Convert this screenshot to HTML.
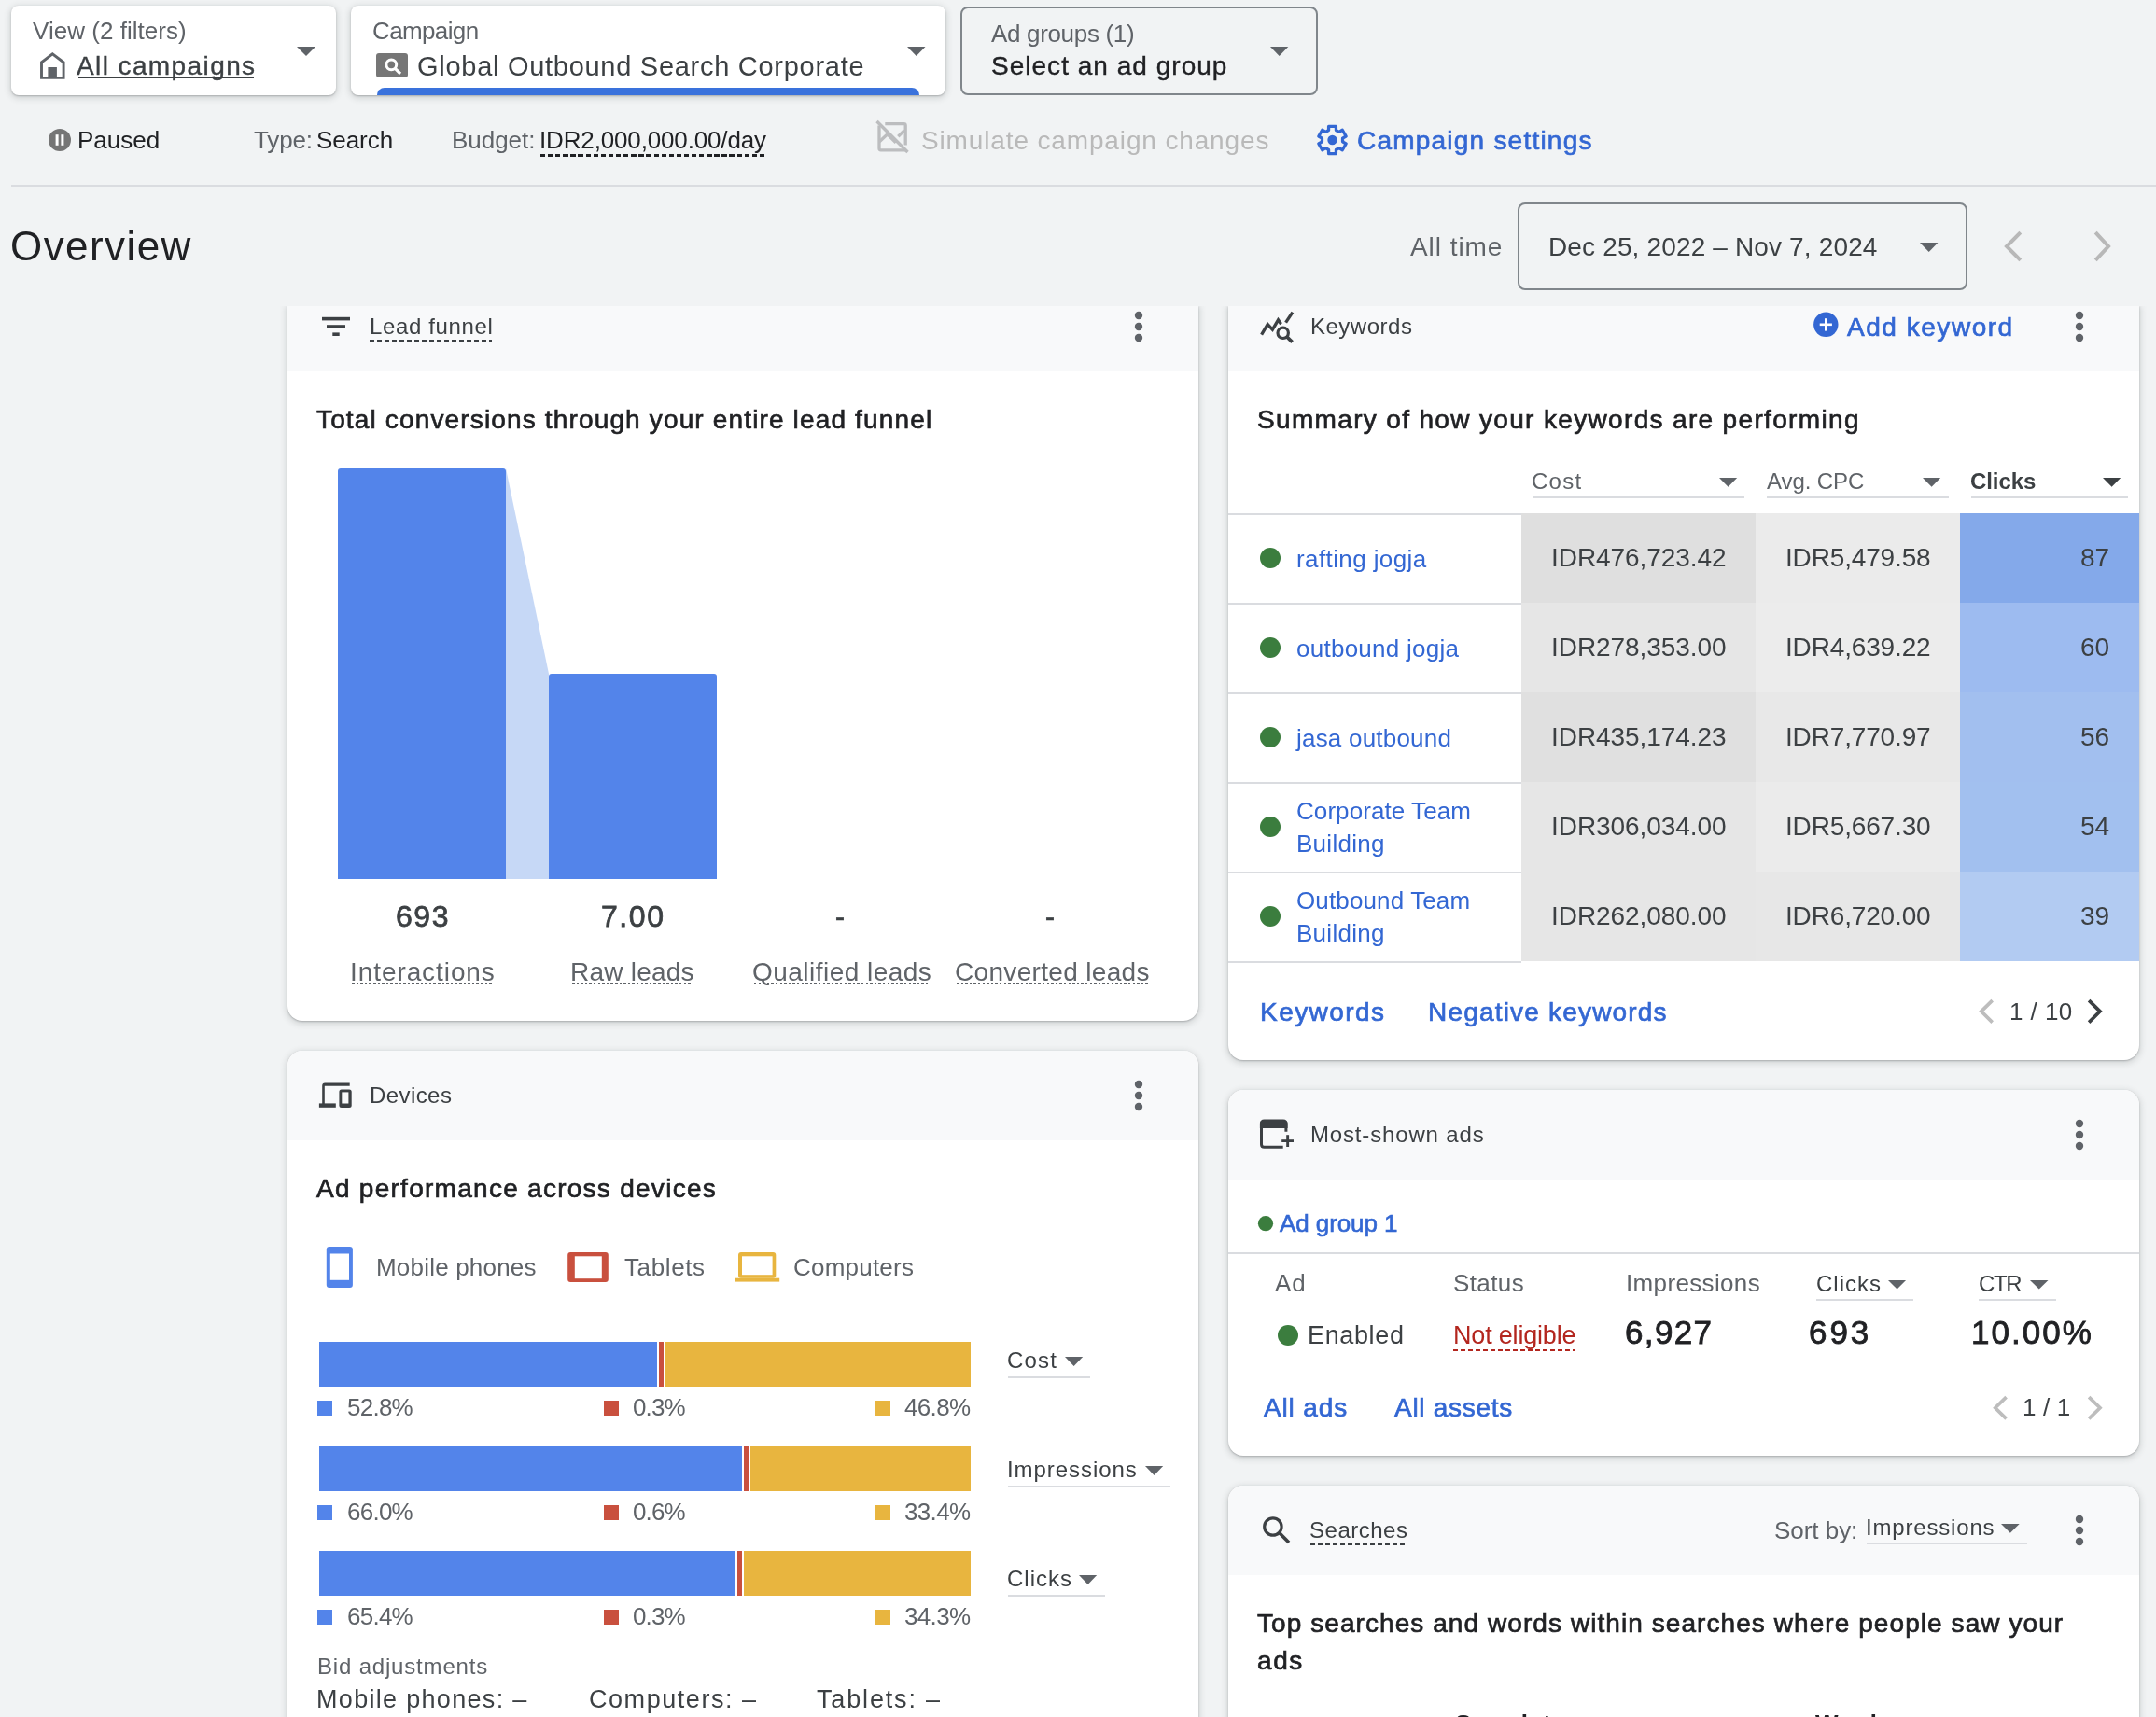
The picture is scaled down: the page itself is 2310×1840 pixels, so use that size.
<!DOCTYPE html><html><head><meta charset="utf-8"><style>
html,body{margin:0;padding:0;width:2310px;height:1840px;overflow:hidden;background:#f1f3f4}
#root{position:relative;width:2310px;height:1840px;overflow:hidden;background:#f1f3f4;font-family:"Liberation Sans",sans-serif}
.t{position:absolute;white-space:pre;font-family:"Liberation Sans",sans-serif;will-change:transform}
</style></head><body><div id="root">
<div style="position:absolute;left:308px;top:328px;width:976px;height:766px;background:#fff;border-radius:0 0 16px 16px;overflow:hidden;box-shadow:0 1px 2px rgba(60,64,67,.30),0 2px 6px 2px rgba(60,64,67,.15);"><div style="position:absolute;left:0;top:0;right:0;height:69.6px;background:#f8f9fa"></div></div>
<div style="position:absolute;left:308px;top:1126px;width:976px;height:774px;background:#fff;border-radius:16px;overflow:hidden;box-shadow:0 1px 2px rgba(60,64,67,.30),0 2px 6px 2px rgba(60,64,67,.15);"><div style="position:absolute;left:0;top:0;right:0;height:96px;background:#f8f9fa"></div></div>
<div style="position:absolute;left:1316px;top:328px;width:976px;height:808px;background:#fff;border-radius:0 0 16px 16px;overflow:hidden;box-shadow:0 1px 2px rgba(60,64,67,.30),0 2px 6px 2px rgba(60,64,67,.15);"><div style="position:absolute;left:0;top:0;right:0;height:69.7px;background:#f8f9fa"></div></div>
<div style="position:absolute;left:1316px;top:1168px;width:976px;height:392px;background:#fff;border-radius:16px;overflow:hidden;box-shadow:0 1px 2px rgba(60,64,67,.30),0 2px 6px 2px rgba(60,64,67,.15);"><div style="position:absolute;left:0;top:0;right:0;height:95.6px;background:#f8f9fa"></div></div>
<div style="position:absolute;left:1316px;top:1592px;width:976px;height:308px;background:#fff;border-radius:16px;overflow:hidden;box-shadow:0 1px 2px rgba(60,64,67,.30),0 2px 6px 2px rgba(60,64,67,.15);"><div style="position:absolute;left:0;top:0;right:0;height:96px;background:#f8f9fa"></div></div>
<svg style="position:absolute;left:340px;top:335px;overflow:visible" width="40" height="30" viewBox="340 335 40 30"><rect x="345" y="339.8" width="30" height="3.6" fill="#3c4043"/><rect x="350" y="348.2" width="20" height="3.6" fill="#3c4043"/><rect x="356.3" y="356.4" width="7.4" height="3.6" fill="#3c4043"/></svg>
<div style="position:absolute;left:396px;top:363.5px;width:131px;height:2.4px;background:repeating-linear-gradient(90deg,#3c4043 0 5px,transparent 5px 8px)"></div>
<svg style="position:absolute;left:1214px;top:332px;overflow:visible" width="12" height="36" viewBox="1214 332 12 36"><circle cx="1220" cy="338" r="4.2" fill="#5f6368"/><circle cx="1220" cy="350" r="4.2" fill="#5f6368"/><circle cx="1220" cy="362" r="4.2" fill="#5f6368"/></svg>
<svg style="position:absolute;left:350px;top:495px;overflow:visible" width="430" height="450" viewBox="350 495 430 450"><path d="M542 502 L588 722 L588 942 L542 942 Z" fill="#c6d8f6"/><path d="M362 942 V505 Q362 502 365 502 H539 Q542 502 542 505 V942 Z" fill="#5384ea"/><path d="M588 942 V725 Q588 722 591 722 H765 Q768 722 768 725 V942 Z" fill="#5384ea"/></svg>
<div style="position:absolute;left:376.5px;top:1052.8px;width:151.5px;height:2.6px;background:repeating-linear-gradient(90deg,#5f6368 0 2.5px,transparent 2.5px 4.6px)"></div>
<div style="position:absolute;left:612.6px;top:1052.8px;width:129.2px;height:2.6px;background:repeating-linear-gradient(90deg,#5f6368 0 2.5px,transparent 2.5px 4.6px)"></div>
<div style="position:absolute;left:808px;top:1052.8px;width:188.5px;height:2.6px;background:repeating-linear-gradient(90deg,#5f6368 0 2.5px,transparent 2.5px 4.6px)"></div>
<div style="position:absolute;left:1024.8px;top:1052.8px;width:205.2px;height:2.6px;background:repeating-linear-gradient(90deg,#5f6368 0 2.5px,transparent 2.5px 4.6px)"></div>
<svg style="position:absolute;left:338px;top:1156px;overflow:visible" width="44" height="36" viewBox="338 1156 44 36"><path d="M345.2 1183 V1163.5 Q345.2 1160.5 348.2 1160.5 H374.7 V1163.8 H347.8 V1183 Z" fill="#3c4043"/><rect x="341.9" y="1182.4" width="17.9" height="4.4" fill="#3c4043"/><rect x="363.4" y="1167.4" width="13.3" height="19.6" rx="2.5" fill="#3c4043"/><rect x="366.3" y="1170.4" width="7.1" height="12.1" fill="#f8f9fa"/></svg>
<svg style="position:absolute;left:1214px;top:1156px;overflow:visible" width="12" height="36" viewBox="1214 1156 12 36"><circle cx="1220" cy="1162" r="4.2" fill="#5f6368"/><circle cx="1220" cy="1174" r="4.2" fill="#5f6368"/><circle cx="1220" cy="1186" r="4.2" fill="#5f6368"/></svg>
<svg style="position:absolute;left:345px;top:1330px;overflow:visible" width="500" height="56" viewBox="345 1330 500 56"><rect x="349.8" y="1336" width="28.1" height="44" rx="3" fill="#5384ea"/><rect x="353.8" y="1343.5" width="20.2" height="28.3" fill="#fff"/><rect x="608.2" y="1341.9" width="43.6" height="32.2" rx="3" fill="#c9503e"/><rect x="615.8" y="1346.3" width="29" height="23.9" fill="#fff"/><rect x="791" y="1342" width="40.3" height="27.7" rx="3" fill="#e8b53f"/><rect x="795" y="1346.3" width="32.6" height="19.9" fill="#fff"/><rect x="787.5" y="1369.7" width="47.7" height="3.9" fill="#e8b53f"/></svg>
<div style="position:absolute;left:342.0px;top:1438.0px;width:362.0px;height:48.0px;background:#5384ea;"></div>
<div style="position:absolute;left:706.0px;top:1438.0px;width:5.0px;height:48.0px;background:#c9503e;"></div>
<div style="position:absolute;left:713.0px;top:1438.0px;width:327.0px;height:48.0px;background:#e8b53f;"></div>
<div style="position:absolute;left:342.0px;top:1550.0px;width:453.0px;height:48.0px;background:#5384ea;"></div>
<div style="position:absolute;left:797.3px;top:1550.0px;width:4.6px;height:48.0px;background:#c9503e;"></div>
<div style="position:absolute;left:804.0px;top:1550.0px;width:236.0px;height:48.0px;background:#e8b53f;"></div>
<div style="position:absolute;left:342.0px;top:1662.0px;width:445.7px;height:48.0px;background:#5384ea;"></div>
<div style="position:absolute;left:790.0px;top:1662.0px;width:5.0px;height:48.0px;background:#c9503e;"></div>
<div style="position:absolute;left:796.9px;top:1662.0px;width:243.1px;height:48.0px;background:#e8b53f;"></div>
<div style="position:absolute;left:340.0px;top:1501.0px;width:16.0px;height:16.0px;background:#5384ea;"></div>
<div style="position:absolute;left:647.0px;top:1501.0px;width:16.0px;height:16.0px;background:#c9503e;"></div>
<div style="position:absolute;left:938.0px;top:1501.0px;width:16.0px;height:16.0px;background:#e8b53f;"></div>
<div style="position:absolute;left:340.0px;top:1613.0px;width:16.0px;height:16.0px;background:#5384ea;"></div>
<div style="position:absolute;left:647.0px;top:1613.0px;width:16.0px;height:16.0px;background:#c9503e;"></div>
<div style="position:absolute;left:938.0px;top:1613.0px;width:16.0px;height:16.0px;background:#e8b53f;"></div>
<div style="position:absolute;left:340.0px;top:1725.0px;width:16.0px;height:16.0px;background:#5384ea;"></div>
<div style="position:absolute;left:647.0px;top:1725.0px;width:16.0px;height:16.0px;background:#c9503e;"></div>
<div style="position:absolute;left:938.0px;top:1725.0px;width:16.0px;height:16.0px;background:#e8b53f;"></div>
<svg style="position:absolute;left:1140.5px;top:1453.8px;overflow:visible" width="19.2" height="10" viewBox="1140.5 1453.8 19.2 10"><path d="M1140.5 1453.8 h19.2 l-9.6 10 z" fill="#5f6368"/></svg>
<div style="position:absolute;left:1080.0px;top:1475.0px;width:87.7px;height:2.0px;background:#dadce0;"></div>
<svg style="position:absolute;left:1226.8px;top:1570.7px;overflow:visible" width="19.2" height="10" viewBox="1226.8 1570.7 19.2 10"><path d="M1226.8 1570.7 h19.2 l-9.6 10 z" fill="#5f6368"/></svg>
<div style="position:absolute;left:1080.0px;top:1592.0px;width:174.0px;height:2.0px;background:#dadce0;"></div>
<svg style="position:absolute;left:1156.4px;top:1687.8px;overflow:visible" width="19.2" height="10" viewBox="1156.4 1687.8 19.2 10"><path d="M1156.4 1687.8 h19.2 l-9.6 10 z" fill="#5f6368"/></svg>
<div style="position:absolute;left:1080.0px;top:1708.5px;width:104.0px;height:2.0px;background:#dadce0;"></div>
<svg style="position:absolute;left:1345px;top:330px;overflow:visible" width="46" height="42" viewBox="1345 330 46 42"><path d="M1351.6 358.6 L1358.2 347.6 L1363.4 353.2 L1369.5 342.9 L1372.6 347.3" fill="none" stroke="#3c4043" stroke-width="3.3" stroke-linejoin="miter"/><path d="M1377.6 345.6 L1384.9 334.6" fill="none" stroke="#3c4043" stroke-width="3.3"/><circle cx="1374.7" cy="356.8" r="5.7" fill="none" stroke="#3c4043" stroke-width="3.2"/><path d="M1378.8 360.9 L1384.6 366.6" stroke="#3c4043" stroke-width="3.6"/></svg>
<svg style="position:absolute;left:1940px;top:331px;overflow:visible" width="32" height="32" viewBox="1940 331 32 32"><circle cx="1956.3" cy="347.8" r="13.2" fill="#3367d3"/><rect x="1949.7" y="346.5" width="13.2" height="2.6" fill="#fff"/><rect x="1955" y="341.2" width="2.6" height="13.4" fill="#fff"/></svg>
<svg style="position:absolute;left:2222px;top:332px;overflow:visible" width="12" height="36" viewBox="2222 332 12 36"><circle cx="2228" cy="338" r="4.2" fill="#5f6368"/><circle cx="2228" cy="350" r="4.2" fill="#5f6368"/><circle cx="2228" cy="362" r="4.2" fill="#5f6368"/></svg>
<svg style="position:absolute;left:1841.8px;top:511.8px;overflow:visible" width="19.2" height="9.8" viewBox="1841.8 511.8 19.2 9.8"><path d="M1841.8 511.8 h19.2 l-9.6 9.8 z" fill="#5f6368"/></svg>
<div style="position:absolute;left:1642.0px;top:531.6px;width:226.7px;height:2.0px;background:#dadce0;"></div>
<svg style="position:absolute;left:2060px;top:511.8px;overflow:visible" width="19.2" height="9.8" viewBox="2060 511.8 19.2 9.8"><path d="M2060 511.8 h19.2 l-9.6 9.8 z" fill="#5f6368"/></svg>
<div style="position:absolute;left:1893.0px;top:531.6px;width:194.8px;height:2.0px;background:#dadce0;"></div>
<svg style="position:absolute;left:2252.5px;top:511.8px;overflow:visible" width="19.2" height="9.8" viewBox="2252.5 511.8 19.2 9.8"><path d="M2252.5 511.8 h19.2 l-9.6 9.8 z" fill="#3c4043"/></svg>
<div style="position:absolute;left:2112.0px;top:531.6px;width:167.6px;height:2.0px;background:#dadce0;"></div>
<div style="position:absolute;left:1316.0px;top:549.5px;width:314.0px;height:2.0px;background:#dadce0;"></div>
<div style="position:absolute;left:1630.0px;top:550.0px;width:251.0px;height:96.0px;background:#dfdfdf;"></div>
<div style="position:absolute;left:1881.0px;top:550.0px;width:219.0px;height:96.0px;background:#ebebeb;"></div>
<div style="position:absolute;left:2100.0px;top:550.0px;width:192.0px;height:96.0px;background:#84a9ea;"></div>
<div style="position:absolute;left:1316.0px;top:646.0px;width:314.0px;height:2.0px;background:#dadce0;"></div>
<svg style="position:absolute;left:1349px;top:586px;overflow:visible" width="24" height="24" viewBox="1349 586 24 24"><circle cx="1361" cy="598" r="11" fill="#3b7d3e"/></svg>
<div style="position:absolute;left:1630.0px;top:646.0px;width:251.0px;height:96.0px;background:#e6e6e6;"></div>
<div style="position:absolute;left:1881.0px;top:646.0px;width:219.0px;height:96.0px;background:#ececec;"></div>
<div style="position:absolute;left:2100.0px;top:646.0px;width:192.0px;height:96.0px;background:#9dbbf0;"></div>
<div style="position:absolute;left:1316.0px;top:742.0px;width:314.0px;height:2.0px;background:#dadce0;"></div>
<svg style="position:absolute;left:1349px;top:682px;overflow:visible" width="24" height="24" viewBox="1349 682 24 24"><circle cx="1361" cy="694" r="11" fill="#3b7d3e"/></svg>
<div style="position:absolute;left:1630.0px;top:742.0px;width:251.0px;height:96.0px;background:#e0e0e0;"></div>
<div style="position:absolute;left:1881.0px;top:742.0px;width:219.0px;height:96.0px;background:#e8e8e8;"></div>
<div style="position:absolute;left:2100.0px;top:742.0px;width:192.0px;height:96.0px;background:#a2bfef;"></div>
<div style="position:absolute;left:1316.0px;top:838.0px;width:314.0px;height:2.0px;background:#dadce0;"></div>
<svg style="position:absolute;left:1349px;top:778px;overflow:visible" width="24" height="24" viewBox="1349 778 24 24"><circle cx="1361" cy="790" r="11" fill="#3b7d3e"/></svg>
<div style="position:absolute;left:1630.0px;top:838.0px;width:251.0px;height:96.0px;background:#e6e6e6;"></div>
<div style="position:absolute;left:1881.0px;top:838.0px;width:219.0px;height:96.0px;background:#ebebeb;"></div>
<div style="position:absolute;left:2100.0px;top:838.0px;width:192.0px;height:96.0px;background:#a2c0ef;"></div>
<div style="position:absolute;left:1316.0px;top:934.0px;width:314.0px;height:2.0px;background:#dadce0;"></div>
<svg style="position:absolute;left:1349px;top:874px;overflow:visible" width="24" height="24" viewBox="1349 874 24 24"><circle cx="1361" cy="886" r="11" fill="#3b7d3e"/></svg>
<div style="position:absolute;left:1630.0px;top:934.0px;width:251.0px;height:96.0px;background:#e6e6e6;"></div>
<div style="position:absolute;left:1881.0px;top:934.0px;width:219.0px;height:96.0px;background:#e7e7e7;"></div>
<div style="position:absolute;left:2100.0px;top:934.0px;width:192.0px;height:96.0px;background:#b2cbf2;"></div>
<div style="position:absolute;left:1316.0px;top:1030.0px;width:314.0px;height:2.0px;background:#dadce0;"></div>
<svg style="position:absolute;left:1349px;top:970px;overflow:visible" width="24" height="24" viewBox="1349 970 24 24"><circle cx="1361" cy="982" r="11" fill="#3b7d3e"/></svg>
<svg style="position:absolute;left:2116px;top:1067px;overflow:visible" width="23.8" height="33.7" viewBox="2116 1067 23.8 33.7"><path d="M2134.69 1072.11 L2122.78 1083.85 L2134.69 1095.59" fill="none" stroke="#bdbdbd" stroke-width="3.7" stroke-linecap="butt"/></svg>
<svg style="position:absolute;left:2232.7px;top:1067px;overflow:visible" width="23.8" height="33.7" viewBox="2232.7 1067 23.8 33.7"><path d="M2237.81 1072.11 L2249.72 1083.85 L2237.81 1095.59" fill="none" stroke="#3c4043" stroke-width="3.7" stroke-linecap="butt"/></svg>
<svg style="position:absolute;left:1346px;top:1197px;overflow:visible" width="44" height="38" viewBox="1346 1197 44 38"><path d="M1374.7 1229.2 H1354.5 Q1351.5 1229.2 1351.5 1226.2 V1204.1 Q1351.5 1201.1 1354.5 1201.1 H1374.9 Q1377.9 1201.1 1377.9 1204.1 V1212.7" fill="none" stroke="#3c4043" stroke-width="3"/><path d="M1349.9 1208.9 V1204.1 Q1349.9 1201.1 1352.9 1201.1 H1376.6 Q1379.6 1201.1 1379.6 1204.1 V1208.9 Z" fill="#3c4043"/><rect x="1373.2" y="1221.2" width="12.8" height="2.8" fill="#3c4043"/><rect x="1378.2" y="1216.2" width="2.9" height="12.8" fill="#3c4043"/></svg>
<svg style="position:absolute;left:2222px;top:1198px;overflow:visible" width="12" height="36" viewBox="2222 1198 12 36"><circle cx="2228" cy="1204" r="4.2" fill="#5f6368"/><circle cx="2228" cy="1216" r="4.2" fill="#5f6368"/><circle cx="2228" cy="1228" r="4.2" fill="#5f6368"/></svg>
<svg style="position:absolute;left:1346px;top:1302px;overflow:visible" width="20" height="20" viewBox="1346 1302 20 20"><circle cx="1356" cy="1311.2" r="8.1" fill="#3b7d3e"/></svg>
<div style="position:absolute;left:1316.0px;top:1341.5px;width:976.0px;height:2.0px;background:#dadce0;"></div>
<svg style="position:absolute;left:2022.9px;top:1371.5px;overflow:visible" width="19.1" height="9.6" viewBox="2022.9 1371.5 19.1 9.6"><path d="M2022.9 1371.5 h19.1 l-9.55 9.6 z" fill="#5f6368"/></svg>
<div style="position:absolute;left:1946.0px;top:1391.8px;width:103.6px;height:2.0px;background:#dadce0;"></div>
<svg style="position:absolute;left:2174.8px;top:1371.5px;overflow:visible" width="19.5" height="9.6" viewBox="2174.8 1371.5 19.5 9.6"><path d="M2174.8 1371.5 h19.5 l-9.75 9.6 z" fill="#5f6368"/></svg>
<div style="position:absolute;left:2120.0px;top:1391.8px;width:82.6px;height:2.0px;background:#dadce0;"></div>
<svg style="position:absolute;left:1367px;top:1419px;overflow:visible" width="26" height="26" viewBox="1367 1419 26 26"><circle cx="1380" cy="1431" r="11" fill="#3b7d3e"/></svg>
<div style="position:absolute;left:1557px;top:1445.6px;width:130px;height:2.4px;background:repeating-linear-gradient(90deg,#b3261e 0 5px,transparent 5px 8px)"></div>
<svg style="position:absolute;left:2130.7px;top:1491.5px;overflow:visible" width="23.7" height="33.5" viewBox="2130.7 1491.5 23.7 33.5"><path d="M2149.29 1496.61 L2137.47 1508.25 L2149.29 1519.89" fill="none" stroke="#bdbdbd" stroke-width="3.7" stroke-linecap="butt"/></svg>
<svg style="position:absolute;left:2232.7px;top:1491.5px;overflow:visible" width="23.8" height="33.5" viewBox="2232.7 1491.5 23.8 33.5"><path d="M2237.81 1496.61 L2249.72 1508.25 L2237.81 1519.89" fill="none" stroke="#bdbdbd" stroke-width="3.7" stroke-linecap="butt"/></svg>
<svg style="position:absolute;left:1348px;top:1620px;overflow:visible" width="40" height="40" viewBox="1348 1620 40 40"><circle cx="1363.9" cy="1636" r="9.2" fill="none" stroke="#3c4043" stroke-width="3.2"/><path d="M1370.6 1642.6 L1381 1653" stroke="#3c4043" stroke-width="3.6"/></svg>
<div style="position:absolute;left:1404px;top:1653.5px;width:103px;height:2.4px;background:repeating-linear-gradient(90deg,#3c4043 0 5px,transparent 5px 8px)"></div>
<svg style="position:absolute;left:2144px;top:1632.9px;overflow:visible" width="19.7" height="9.7" viewBox="2144 1632.9 19.7 9.7"><path d="M2144 1632.9 h19.7 l-9.85 9.7 z" fill="#5f6368"/></svg>
<div style="position:absolute;left:2000.0px;top:1652.7px;width:171.8px;height:2.0px;background:#dadce0;"></div>
<svg style="position:absolute;left:2222px;top:1622px;overflow:visible" width="12" height="36" viewBox="2222 1622 12 36"><circle cx="2228" cy="1628" r="4.2" fill="#5f6368"/><circle cx="2228" cy="1640" r="4.2" fill="#5f6368"/><circle cx="2228" cy="1652" r="4.2" fill="#5f6368"/></svg>
<div style="position:absolute;left:0.0px;top:0.0px;width:2310.0px;height:328.0px;background:#f1f3f4;"></div>
<div style="position:absolute;left:12px;top:6px;width:348px;height:96px;background:#fff;border-radius:8px;box-shadow:0 1px 2px rgba(60,64,67,.30),0 2px 6px 2px rgba(60,64,67,.15);"></div>
<div style="position:absolute;left:376px;top:6px;width:637px;height:96px;background:#fff;border-radius:8px;overflow:hidden;box-shadow:0 1px 2px rgba(60,64,67,.30),0 2px 6px 2px rgba(60,64,67,.15);"><div style="position:absolute;left:28px;top:88px;width:581px;height:16px;border-radius:8px;background:#3a72dc"></div></div>
<div style="position:absolute;left:1029px;top:6.5px;width:379px;height:91px;border:2px solid #80868b;border-radius:8px"></div>
<svg style="position:absolute;left:40px;top:52px;overflow:visible" width="34" height="36" viewBox="40 52 34 36"><path d="M44.5 83.4 V66.8 L56.3 57.9 L68.1 66.8 V83.4 Z" fill="none" stroke="#5f6368" stroke-width="2.9"/><rect x="51.4" y="72" width="9.5" height="11" fill="#5f6368"/></svg>
<svg style="position:absolute;left:318px;top:50px;overflow:visible" width="20" height="10" viewBox="318 50 20 10"><path d="M318 50 h20 l-10 10 z" fill="#5f6368"/></svg>
<svg style="position:absolute;left:400px;top:54px;overflow:visible" width="40" height="32" viewBox="400 54 40 32"><rect x="403" y="57" width="34" height="26" rx="3" fill="#767676"/><circle cx="419.3" cy="69.3" r="5.4" fill="none" stroke="#fff" stroke-width="3"/><path d="M423.3 73.3 L429 79" stroke="#fff" stroke-width="3.2"/></svg>
<svg style="position:absolute;left:971.5px;top:50px;overflow:visible" width="19.5" height="10" viewBox="971.5 50 19.5 10"><path d="M971.5 50 h19.5 l-9.75 10 z" fill="#5f6368"/></svg>
<svg style="position:absolute;left:1361px;top:50px;overflow:visible" width="19.3" height="10" viewBox="1361 50 19.3 10"><path d="M1361 50 h19.3 l-9.65 10 z" fill="#5f6368"/></svg>
<div style="position:absolute;left:84.0px;top:81.9px;width:188.0px;height:2.0px;background:#3c4043;"></div>
<svg style="position:absolute;left:50px;top:136px;overflow:visible" width="28" height="28" viewBox="50 136 28 28"><circle cx="64" cy="150" r="12" fill="#757575"/><rect x="59.6" y="144.2" width="3" height="11.6" fill="#fff"/><rect x="65.4" y="144.2" width="3" height="11.6" fill="#fff"/></svg>
<div style="position:absolute;left:579px;top:165.3px;width:242px;height:2.6px;background:repeating-linear-gradient(90deg,#202124 0 5.3px,transparent 5.3px 8.1px)"></div>
<svg style="position:absolute;left:934px;top:125px;overflow:visible" width="44" height="44" viewBox="934 125 44 44"><g fill="none" stroke="#bcbdbf" stroke-width="3.3"><path d="M939.5 130 L972.5 163"/><path d="M948.3 132.7 H968.5 Q970.2 132.7 970.2 134.4 V155.5"/><path d="M942 134.5 V159 Q942 160.8 943.8 160.8 H970.5"/><path d="M942.3 151.8 L950.8 143.8 L959.8 152.8"/><path d="M962.3 146.2 L969 139.6"/></g></svg>
<svg style="position:absolute;left:1406px;top:128px;overflow:visible" width="44" height="44" viewBox="1406 128 44 44"><path d="M1423.55 139.52 L1423.60 135.31 L1431.40 135.31 L1431.45 139.52 L1434.60 141.34 L1438.28 139.28 L1442.17 146.03 L1438.55 148.18 L1438.55 151.82 L1442.17 153.97 L1438.28 160.72 L1434.60 158.66 L1431.45 160.48 L1431.40 164.69 L1423.60 164.69 L1423.55 160.48 L1420.40 158.66 L1416.72 160.72 L1412.83 153.97 L1416.45 151.82 L1416.45 148.18 L1412.83 146.03 L1416.72 139.28 L1420.40 141.34 Z" fill="none" stroke="#3367d3" stroke-width="3.3" stroke-linejoin="round"/><circle cx="1427.5" cy="150" r="5.2" fill="#3367d3"/></svg>
<div style="position:absolute;left:12.0px;top:198.0px;width:2298.0px;height:2.0px;background:#dadce0;"></div>
<div style="position:absolute;left:1626px;top:217px;width:478px;height:90px;border:2px solid #80868b;border-radius:8px"></div>
<svg style="position:absolute;left:2057px;top:260px;overflow:visible" width="19.4" height="10" viewBox="2057 260 19.4 10"><path d="M2057 260 h19.4 l-9.7 10 z" fill="#5f6368"/></svg>
<svg style="position:absolute;left:2143px;top:244px;overflow:visible" width="27" height="40" viewBox="2143 244 27 40"><path d="M2164.8 249.2 L2150 264 L2164.8 278.8" fill="none" stroke="#b8b8b8" stroke-width="4" stroke-linecap="butt"/></svg>
<svg style="position:absolute;left:2240px;top:244px;overflow:visible" width="26" height="40" viewBox="2240 244 26 40"><path d="M2245.2 249.2 L2259 264 L2245.2 278.8" fill="none" stroke="#b8b8b8" stroke-width="4" stroke-linecap="butt"/></svg>
<div class="t" style="left:35.4px;top:20.0px;font-size:26px;line-height:26px;color:#5f6368;font-weight:400;letter-spacing:0.03px;">View (2 filters)</div>
<div class="t" style="left:82.3px;top:57.0px;font-size:28px;line-height:28px;color:#3c4043;font-weight:400;letter-spacing:1.40px;-webkit-text-stroke:0.39px #3c4043;">All campaigns</div>
<div class="t" style="left:399.4px;top:20.0px;font-size:26px;line-height:26px;color:#5f6368;font-weight:400;letter-spacing:-0.63px;">Campaign</div>
<div class="t" style="left:447.3px;top:57.0px;font-size:29px;line-height:29px;color:#3c4043;font-weight:400;letter-spacing:0.72px;">Global Outbound Search Corporate</div>
<div class="t" style="left:1062.4px;top:22.5px;font-size:26px;line-height:26px;color:#5f6368;font-weight:400;letter-spacing:-0.33px;">Ad groups (1)</div>
<div class="t" style="left:1062.3px;top:57.0px;font-size:28px;line-height:28px;color:#202124;font-weight:400;letter-spacing:1.02px;-webkit-text-stroke:0.39px #202124;">Select an ad group</div>
<div class="t" style="left:83.4px;top:137.0px;font-size:26px;line-height:26px;color:#202124;font-weight:400;letter-spacing:-0.01px;">Paused</div>
<div class="t" style="left:272.4px;top:137.0px;font-size:26px;line-height:26px;color:#5f6368;font-weight:400;letter-spacing:-0.14px;">Type:</div>
<div class="t" style="left:339.4px;top:137.0px;font-size:26px;line-height:26px;color:#202124;font-weight:400;letter-spacing:-0.05px;">Search</div>
<div class="t" style="left:484.4px;top:137.0px;font-size:26px;line-height:26px;color:#5f6368;font-weight:400;letter-spacing:-0.04px;">Budget:</div>
<div class="t" style="left:578.4px;top:137.0px;font-size:26px;line-height:26px;color:#202124;font-weight:400;letter-spacing:-0.15px;">IDR2,000,000.00/day</div>
<div class="t" style="left:987.3px;top:137.0px;font-size:28px;line-height:28px;color:#b9b9b9;font-weight:400;letter-spacing:0.86px;">Simulate campaign changes</div>
<div class="t" style="left:1454.3px;top:137.0px;font-size:28px;line-height:28px;color:#3367d3;font-weight:400;letter-spacing:1.22px;-webkit-text-stroke:0.67px #3367d3;">Campaign settings</div>
<div class="t" style="left:11.4px;top:242.0px;font-size:44px;line-height:44px;color:#202124;font-weight:400;letter-spacing:1.42px;">Overview</div>
<div class="t" style="left:1511.3px;top:251.0px;font-size:28px;line-height:28px;color:#5f6368;font-weight:400;letter-spacing:0.94px;">All time</div>
<div class="t" style="left:1659.3px;top:251.0px;font-size:28px;line-height:28px;color:#3c4043;font-weight:400;letter-spacing:0.15px;">Dec 25, 2022 – Nov 7, 2024</div>
<div class="t" style="left:395.6px;top:338.0px;font-size:24px;line-height:24px;color:#3c4043;font-weight:400;letter-spacing:0.64px;">Lead funnel</div>
<div class="t" style="left:339.3px;top:436.0px;font-size:28px;line-height:28px;color:#202124;font-weight:400;letter-spacing:1.15px;-webkit-text-stroke:0.67px #202124;">Total conversions through your entire lead funnel</div>
<div class="t" style="left:424.1px;top:966.0px;font-size:32px;line-height:32px;color:#3c4043;font-weight:400;letter-spacing:1.52px;-webkit-text-stroke:0.77px #3c4043;">693</div>
<div class="t" style="left:643.6px;top:966.0px;font-size:32px;line-height:32px;color:#3c4043;font-weight:400;letter-spacing:1.55px;-webkit-text-stroke:0.77px #3c4043;">7.00</div>
<div class="t" style="left:895.2px;top:968.0px;font-size:30px;line-height:30px;color:#3c4043;font-weight:400;letter-spacing:0.00px;-webkit-text-stroke:0.72px #3c4043;">-</div>
<div class="t" style="left:1120.2px;top:968.0px;font-size:30px;line-height:30px;color:#3c4043;font-weight:400;letter-spacing:0.00px;-webkit-text-stroke:0.72px #3c4043;">-</div>
<div class="t" style="left:374.8px;top:1027.7px;font-size:28px;line-height:28px;color:#5f6368;font-weight:400;letter-spacing:0.92px;">Interactions</div>
<div class="t" style="left:610.9px;top:1027.7px;font-size:28px;line-height:28px;color:#5f6368;font-weight:400;letter-spacing:0.23px;">Raw leads</div>
<div class="t" style="left:806.3px;top:1027.7px;font-size:28px;line-height:28px;color:#5f6368;font-weight:400;letter-spacing:0.47px;">Qualified leads</div>
<div class="t" style="left:1023.1px;top:1027.7px;font-size:28px;line-height:28px;color:#5f6368;font-weight:400;letter-spacing:0.33px;">Converted leads</div>
<div class="t" style="left:395.6px;top:1162.0px;font-size:24px;line-height:24px;color:#3c4043;font-weight:400;letter-spacing:0.42px;">Devices</div>
<div class="t" style="left:339.3px;top:1260.0px;font-size:28px;line-height:28px;color:#202124;font-weight:400;letter-spacing:1.27px;-webkit-text-stroke:0.67px #202124;">Ad performance across devices</div>
<div class="t" style="left:403.4px;top:1344.7px;font-size:26px;line-height:26px;color:#5f6368;font-weight:400;letter-spacing:0.20px;">Mobile phones</div>
<div class="t" style="left:669.2px;top:1344.7px;font-size:26px;line-height:26px;color:#5f6368;font-weight:400;letter-spacing:0.62px;">Tablets</div>
<div class="t" style="left:850.4px;top:1344.7px;font-size:26px;line-height:26px;color:#5f6368;font-weight:400;letter-spacing:0.22px;">Computers</div>
<div class="t" style="left:371.8px;top:1495.4px;font-size:26px;line-height:26px;color:#5f6368;font-weight:400;letter-spacing:-0.75px;">52.8%</div>
<div class="t" style="left:677.8px;top:1495.4px;font-size:26px;line-height:26px;color:#5f6368;font-weight:400;letter-spacing:-0.88px;">0.3%</div>
<div class="t" style="left:969.4px;top:1495.4px;font-size:26px;line-height:26px;color:#5f6368;font-weight:400;letter-spacing:-0.65px;">46.8%</div>
<div class="t" style="left:371.8px;top:1607.4px;font-size:26px;line-height:26px;color:#5f6368;font-weight:400;letter-spacing:-0.75px;">66.0%</div>
<div class="t" style="left:677.8px;top:1607.4px;font-size:26px;line-height:26px;color:#5f6368;font-weight:400;letter-spacing:-0.88px;">0.6%</div>
<div class="t" style="left:969.4px;top:1607.4px;font-size:26px;line-height:26px;color:#5f6368;font-weight:400;letter-spacing:-0.65px;">33.4%</div>
<div class="t" style="left:371.8px;top:1719.4px;font-size:26px;line-height:26px;color:#5f6368;font-weight:400;letter-spacing:-0.75px;">65.4%</div>
<div class="t" style="left:677.8px;top:1719.4px;font-size:26px;line-height:26px;color:#5f6368;font-weight:400;letter-spacing:-0.88px;">0.3%</div>
<div class="t" style="left:969.4px;top:1719.4px;font-size:26px;line-height:26px;color:#5f6368;font-weight:400;letter-spacing:-0.65px;">34.3%</div>
<div class="t" style="left:1079.3px;top:1445.6px;font-size:24px;line-height:24px;color:#3c4043;font-weight:400;letter-spacing:1.21px;">Cost</div>
<div class="t" style="left:1079.3px;top:1562.5px;font-size:24px;line-height:24px;color:#3c4043;font-weight:400;letter-spacing:0.94px;">Impressions</div>
<div class="t" style="left:1079.1px;top:1679.8px;font-size:24px;line-height:24px;color:#3c4043;font-weight:400;letter-spacing:1.02px;">Clicks</div>
<div class="t" style="left:339.9px;top:1773.6px;font-size:24px;line-height:24px;color:#5f6368;font-weight:400;letter-spacing:0.82px;">Bid adjustments</div>
<div class="t" style="left:339.4px;top:1807.7px;font-size:27px;line-height:27px;color:#3c4043;font-weight:400;letter-spacing:1.31px;">Mobile phones: –</div>
<div class="t" style="left:631.0px;top:1807.7px;font-size:27px;line-height:27px;color:#3c4043;font-weight:400;letter-spacing:1.55px;">Computers: –</div>
<div class="t" style="left:875.1px;top:1807.7px;font-size:27px;line-height:27px;color:#3c4043;font-weight:400;letter-spacing:1.84px;">Tablets: –</div>
<div class="t" style="left:1404.1px;top:338.2px;font-size:24px;line-height:24px;color:#3c4043;font-weight:400;letter-spacing:0.50px;">Keywords</div>
<div class="t" style="left:1979.3px;top:336.9px;font-size:28px;line-height:28px;color:#3367d3;font-weight:400;letter-spacing:1.53px;-webkit-text-stroke:0.67px #3367d3;">Add keyword</div>
<div class="t" style="left:1347.0px;top:436.0px;font-size:28px;line-height:28px;color:#202124;font-weight:400;letter-spacing:1.34px;-webkit-text-stroke:0.67px #202124;">Summary of how your keywords are performing</div>
<div class="t" style="left:1641.4px;top:503.8px;font-size:24px;line-height:24px;color:#5f6368;font-weight:400;letter-spacing:1.24px;">Cost</div>
<div class="t" style="left:1892.6px;top:503.8px;font-size:24px;line-height:24px;color:#5f6368;font-weight:400;letter-spacing:-0.08px;">Avg. CPC</div>
<div class="t" style="left:2111.2px;top:503.8px;font-size:24px;line-height:24px;color:#3c4043;font-weight:700;letter-spacing:-0.09px;">Clicks</div>
<div class="t" style="left:1389.1px;top:585.7px;font-size:26px;line-height:26px;color:#3367d3;font-weight:400;letter-spacing:0.40px;">rafting jogja</div>
<div class="t" style="left:1662.0px;top:584.0px;font-size:28px;line-height:28px;color:#3c4043;font-weight:400;letter-spacing:-0.06px;">IDR476,723.42</div>
<div class="t" style="left:1912.7px;top:584.0px;font-size:28px;line-height:28px;color:#3c4043;font-weight:400;letter-spacing:-0.16px;">IDR5,479.58</div>
<div class="t" style="left:2229.2px;top:584.0px;font-size:28px;line-height:28px;color:#3c4043;font-weight:400;letter-spacing:0.00px;">87</div>
<div class="t" style="left:1389.1px;top:681.7px;font-size:26px;line-height:26px;color:#3367d3;font-weight:400;letter-spacing:0.26px;">outbound jogja</div>
<div class="t" style="left:1662.0px;top:680.0px;font-size:28px;line-height:28px;color:#3c4043;font-weight:400;letter-spacing:-0.06px;">IDR278,353.00</div>
<div class="t" style="left:1912.7px;top:680.0px;font-size:28px;line-height:28px;color:#3c4043;font-weight:400;letter-spacing:-0.16px;">IDR4,639.22</div>
<div class="t" style="left:2229.2px;top:680.0px;font-size:28px;line-height:28px;color:#3c4043;font-weight:400;letter-spacing:0.00px;">60</div>
<div class="t" style="left:1389.1px;top:777.7px;font-size:26px;line-height:26px;color:#3367d3;font-weight:400;letter-spacing:0.21px;">jasa outbound</div>
<div class="t" style="left:1662.0px;top:776.0px;font-size:28px;line-height:28px;color:#3c4043;font-weight:400;letter-spacing:-0.06px;">IDR435,174.23</div>
<div class="t" style="left:1912.7px;top:776.0px;font-size:28px;line-height:28px;color:#3c4043;font-weight:400;letter-spacing:-0.16px;">IDR7,770.97</div>
<div class="t" style="left:2229.2px;top:776.0px;font-size:28px;line-height:28px;color:#3c4043;font-weight:400;letter-spacing:0.00px;">56</div>
<div class="t" style="left:1389.1px;top:855.7px;font-size:26px;line-height:26px;color:#3367d3;font-weight:400;letter-spacing:0.07px;">Corporate Team</div>
<div class="t" style="left:1389.1px;top:891.2px;font-size:26px;line-height:26px;color:#3367d3;font-weight:400;letter-spacing:0.27px;">Building</div>
<div class="t" style="left:1662.0px;top:872.0px;font-size:28px;line-height:28px;color:#3c4043;font-weight:400;letter-spacing:-0.06px;">IDR306,034.00</div>
<div class="t" style="left:1912.7px;top:872.0px;font-size:28px;line-height:28px;color:#3c4043;font-weight:400;letter-spacing:-0.16px;">IDR5,667.30</div>
<div class="t" style="left:2229.2px;top:872.0px;font-size:28px;line-height:28px;color:#3c4043;font-weight:400;letter-spacing:0.00px;">54</div>
<div class="t" style="left:1389.1px;top:951.7px;font-size:26px;line-height:26px;color:#3367d3;font-weight:400;letter-spacing:0.13px;">Outbound Team</div>
<div class="t" style="left:1389.1px;top:987.2px;font-size:26px;line-height:26px;color:#3367d3;font-weight:400;letter-spacing:0.27px;">Building</div>
<div class="t" style="left:1662.0px;top:968.0px;font-size:28px;line-height:28px;color:#3c4043;font-weight:400;letter-spacing:-0.06px;">IDR262,080.00</div>
<div class="t" style="left:1912.7px;top:968.0px;font-size:28px;line-height:28px;color:#3c4043;font-weight:400;letter-spacing:-0.16px;">IDR6,720.00</div>
<div class="t" style="left:2229.2px;top:968.0px;font-size:28px;line-height:28px;color:#3c4043;font-weight:400;letter-spacing:0.00px;">39</div>
<div class="t" style="left:1349.6px;top:1070.7px;font-size:28px;line-height:28px;color:#3367d3;font-weight:400;letter-spacing:1.45px;-webkit-text-stroke:0.67px #3367d3;">Keywords</div>
<div class="t" style="left:1529.8px;top:1070.7px;font-size:28px;line-height:28px;color:#3367d3;font-weight:400;letter-spacing:1.19px;-webkit-text-stroke:0.67px #3367d3;">Negative keywords</div>
<div class="t" style="left:2152.8px;top:1071.2px;font-size:26px;line-height:26px;color:#3c4043;font-weight:400;letter-spacing:0.45px;">1 / 10</div>
<div class="t" style="left:1403.6px;top:1204.0px;font-size:24px;line-height:24px;color:#3c4043;font-weight:400;letter-spacing:0.84px;">Most-shown ads</div>
<div class="t" style="left:1371.0px;top:1298.0px;font-size:26px;line-height:26px;color:#3367d3;font-weight:400;letter-spacing:-0.08px;-webkit-text-stroke:0.62px #3367d3;">Ad group 1</div>
<div class="t" style="left:1366.4px;top:1361.8px;font-size:26px;line-height:26px;color:#5f6368;font-weight:400;letter-spacing:1.01px;">Ad</div>
<div class="t" style="left:1557.0px;top:1361.8px;font-size:26px;line-height:26px;color:#5f6368;font-weight:400;letter-spacing:0.40px;">Status</div>
<div class="t" style="left:1741.6px;top:1361.8px;font-size:26px;line-height:26px;color:#5f6368;font-weight:400;letter-spacing:0.35px;">Impressions</div>
<div class="t" style="left:1945.9px;top:1363.8px;font-size:24px;line-height:24px;color:#3c4043;font-weight:400;letter-spacing:1.00px;">Clicks</div>
<div class="t" style="left:2119.8px;top:1363.8px;font-size:24px;line-height:24px;color:#3c4043;font-weight:400;letter-spacing:-1.42px;">CTR</div>
<div class="t" style="left:1400.7px;top:1417.6px;font-size:27px;line-height:27px;color:#3c4043;font-weight:400;letter-spacing:0.64px;">Enabled</div>
<div class="t" style="left:1557.0px;top:1417.6px;font-size:27px;line-height:27px;color:#b3261e;font-weight:400;letter-spacing:-0.19px;">Not eligible</div>
<div class="t" style="left:1741.1px;top:1410.0px;font-size:35px;line-height:35px;color:#202124;font-weight:400;letter-spacing:1.35px;-webkit-text-stroke:0.84px #202124;">6,927</div>
<div class="t" style="left:1937.8px;top:1410.0px;font-size:35px;line-height:35px;color:#202124;font-weight:400;letter-spacing:2.95px;-webkit-text-stroke:0.84px #202124;">693</div>
<div class="t" style="left:2112.2px;top:1410.0px;font-size:35px;line-height:35px;color:#202124;font-weight:400;letter-spacing:2.04px;-webkit-text-stroke:0.84px #202124;">10.00%</div>
<div class="t" style="left:1353.5px;top:1494.6px;font-size:28px;line-height:28px;color:#3367d3;font-weight:400;letter-spacing:0.85px;-webkit-text-stroke:0.67px #3367d3;">All ads</div>
<div class="t" style="left:1493.8px;top:1494.6px;font-size:28px;line-height:28px;color:#3367d3;font-weight:400;letter-spacing:0.71px;-webkit-text-stroke:0.67px #3367d3;">All assets</div>
<div class="t" style="left:2166.7px;top:1495.0px;font-size:26px;line-height:26px;color:#3c4043;font-weight:400;letter-spacing:0.13px;">1 / 1</div>
<div class="t" style="left:1403.2px;top:1627.7px;font-size:24px;line-height:24px;color:#3c4043;font-weight:400;letter-spacing:0.51px;">Searches</div>
<div class="t" style="left:1901.2px;top:1626.9px;font-size:26px;line-height:26px;color:#5f6368;font-weight:400;letter-spacing:-0.04px;">Sort by:</div>
<div class="t" style="left:1998.6px;top:1625.0px;font-size:24px;line-height:24px;color:#3c4043;font-weight:400;letter-spacing:0.82px;">Impressions</div>
<div class="t" style="left:1347.3px;top:1725.8px;font-size:28px;line-height:28px;color:#202124;font-weight:400;letter-spacing:1.07px;-webkit-text-stroke:0.67px #202124;">Top searches and words within searches where people saw your</div>
<div class="t" style="left:1347.3px;top:1765.7px;font-size:28px;line-height:28px;color:#202124;font-weight:400;letter-spacing:1.60px;-webkit-text-stroke:0.67px #202124;">ads</div>
<div class="t" style="left:1559.4px;top:1834.0px;font-size:26px;line-height:26px;color:#202124;font-weight:700;letter-spacing:0.00px;">Search terms</div>
<div class="t" style="left:1945.4px;top:1834.0px;font-size:26px;line-height:26px;color:#202124;font-weight:700;letter-spacing:0.00px;">Words</div>
</div></body></html>
